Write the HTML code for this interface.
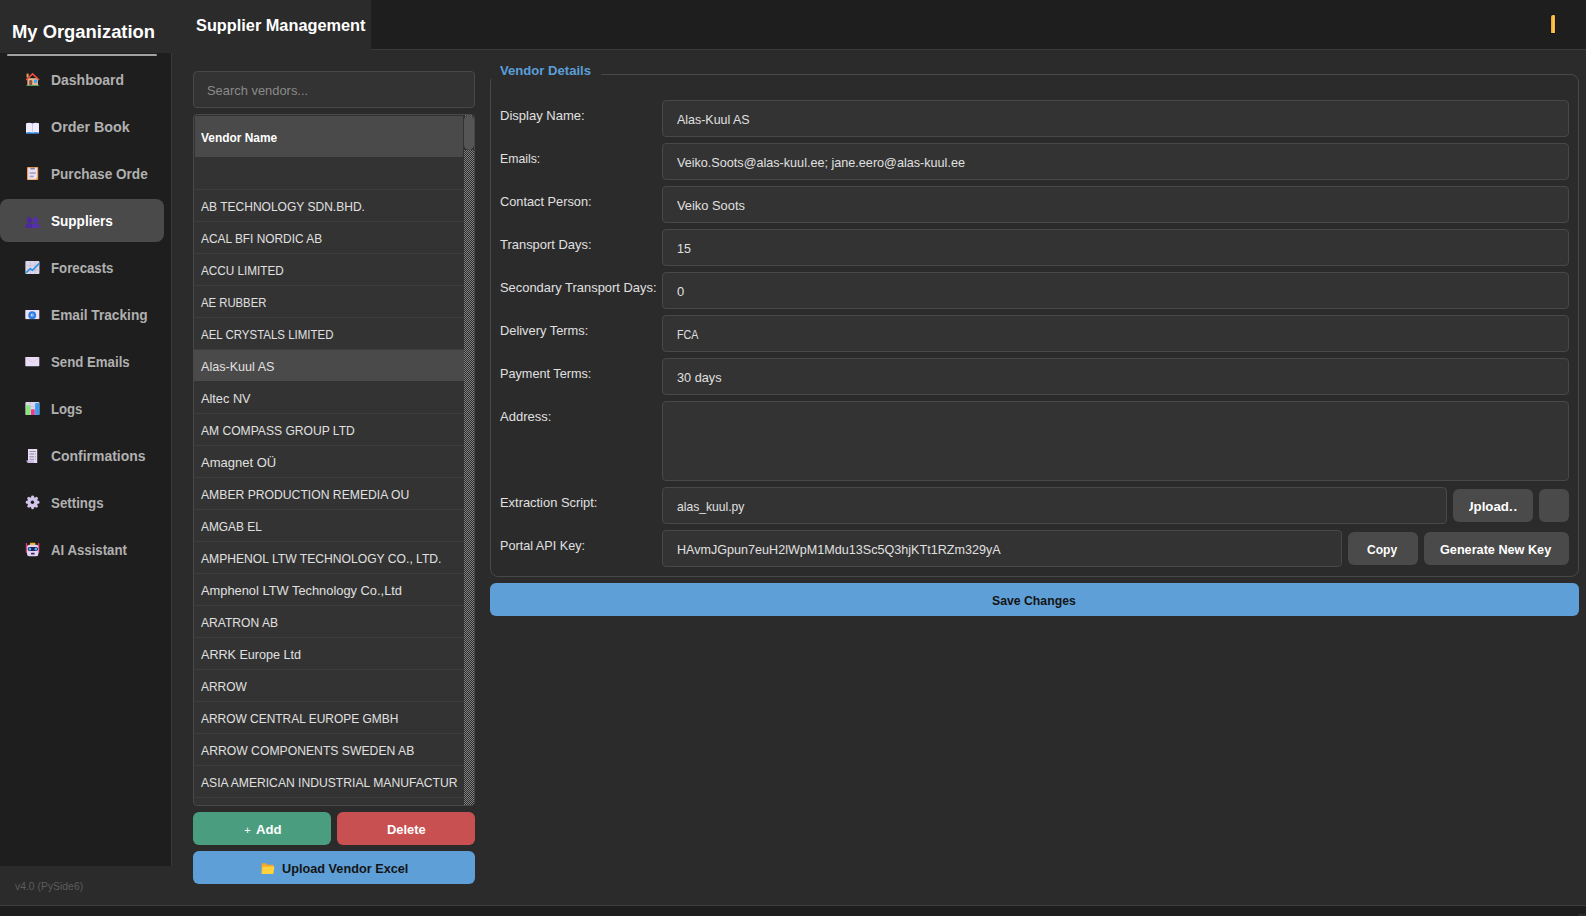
<!DOCTYPE html>
<html lang="en"><head><meta charset="utf-8"><title>Supplier Management</title>
<style>
*{box-sizing:border-box;margin:0;padding:0}
html,body{width:1586px;height:916px;overflow:hidden;background:#2b2b2b}
body{font-family:"Liberation Sans",sans-serif;font-size:13px;color:#e0e0e0}
#app{position:relative;width:1586px;height:916px;background:#2b2b2b;overflow:hidden}
#app>div,#app>nav,#app>header,#app>footer,#app>section,.ic{position:absolute}
.t{position:absolute;white-space:nowrap;transform-origin:0 0;display:block;font-size:13px;line-height:16px;color:#e0e0e0}
.b{font-weight:bold}
.n{font-size:14px;font-weight:bold;color:#b0b0b0}
.w{color:#fff}
.dk{color:#141414}
.sbbody{left:0;top:53px;width:172px;height:813px;background:#1e1e1e;border-right:1px solid #3a3a3a}
.navsel{left:0;top:199px;width:164px;height:43px;border-radius:8px;background:#4a4a4a}
.sbline{left:7px;top:54px;width:150px;height:2px;background:#a2a2a2;border-radius:1px}
.topdark{left:371px;top:0;width:1215px;height:50px;background:#1e1e1e;border-bottom:1px solid #3c3c3c}
.bell{left:1551px;top:15px;width:4px;height:18px;background:linear-gradient(90deg,#f0a030,#ffc84a 65%,#f2aa3c);border-radius:2px 1px 0 0;box-shadow:0 0 0 1px #14161c}
.status{left:0;top:905px;width:1586px;height:11px;background:#1e1e1e;border-top:1px solid #3c3c3c}
.inp{background:#333;border:1px solid #484848;border-radius:4px;height:37px}
.btn{height:33px;border-radius:6px;background:#4a4a4a}
.table{left:193px;top:114px;width:282px;height:692px;border:1px solid #484848;border-radius:4px;background:#333;overflow:hidden}
.th{position:absolute;left:1px;top:1px;width:268px;height:41px;background:#4a4a4a}
.row{position:absolute;left:0;width:270px;height:32px;border-bottom:1px solid #3d3d3d}
.row.sel{background:#4a4a4a;border-bottom-color:#333}
.scroll{position:absolute;left:270px;top:0;width:10px;height:690px;background-color:#333;background-image:conic-gradient(#808080 25%,#2c2c2c 0 50%,#808080 0 75%,#2c2c2c 0);background-size:2px 2px}
.hbg{position:absolute;left:270px;top:1px;width:10px;height:34px;background:#2e2e2e}
.handle{position:absolute;left:270px;top:0px;width:10px;height:35px;background:#555;border-radius:5px}
.group{left:490px;top:74px;width:1089px;height:503px;border:1px solid #484848;border-radius:8px}
.gtitle{left:490px;top:60px;width:111px;height:19px;background:#2b2b2b}
.clip{left:1468.8px;top:489px;width:48.1px;height:33px;overflow:hidden}
</style></head>
<body>
<div id="app">
<nav class="sbbody"></nav>
<div class="navsel"></div>
<div class="sbline"></div>
<span class="t b w" style="left:12px;top:21px;transform:scaleX(1.0218);font-size:18px;line-height:22px;">My Organization</span>
<svg class="ic" style="left:25px;top:72px" width="15" height="14" viewBox="0 0 15 14"><rect x="1.6" y="1.6" width="2" height="4" fill="#e8a060"/><rect x="2.4" y="6.2" width="10.6" height="7" fill="#e6b68c"/><path d="M0.6 7.6 L7.6 0.8 L14.6 7.6 L13.4 8.6 L7.6 3 L1.8 8.6 Z" fill="#f0503a"/><rect x="4.2" y="8" width="3" height="5.2" rx="1.2" fill="#8c5448"/><rect x="9" y="7.6" width="3.2" height="3.2" fill="#35a8f5"/><rect x="1.4" y="13" width="12.8" height="0.9" fill="#58a860"/></svg>
<span class="t n" style="left:51px;top:72px;transform:scaleX(0.9972);">Dashboard</span>
<svg class="ic" style="left:25px;top:122px" width="15" height="13" viewBox="0 0 15 13"><path d="M1 1.6 Q4.4 0.4 7.5 1.8 Q10.6 0.4 14 1.6 V11.8 H1 Z" fill="#3a8ff0"/><path d="M1 1.4 Q4.4 0.2 7.5 1.6 V10.6 Q4.4 9.6 1 10.4 Z" fill="#f3ecff"/><path d="M14 1.4 Q10.6 0.2 7.5 1.6 V10.6 Q10.6 9.6 14 10.4 Z" fill="#f3ecff"/><rect x="7.2" y="1.6" width="0.6" height="9" fill="#cfc4e4"/></svg>
<span class="t n" style="left:51px;top:119px;transform:scaleX(1.0220);">Order Book</span>
<svg class="ic" style="left:26px;top:166px" width="13" height="15" viewBox="0 0 13 15"><rect x="1" y="1" width="11.2" height="13" rx="0.8" fill="#f0a253"/><path d="M2.2 2 H11 V10.4 L9 13.2 H2.2 Z" fill="#e9e2f7"/><rect x="4.2" y="1.4" width="4.8" height="2.2" rx="1" fill="#8d849c"/><rect x="3.6" y="6.2" width="6.2" height="1.7" fill="#aaa2b8"/><rect x="3.6" y="9.6" width="4.2" height="1.7" fill="#aaa2b8"/><path d="M11 10.4 L9 13.2 L8.6 11 Z" fill="#f6f0ff"/></svg>
<span class="t n" style="left:51px;top:166px;transform:scaleX(0.9709);">Purchase Orde</span>
<svg class="ic" style="left:25px;top:216px" width="15" height="13" viewBox="0 0 15 13"><g fill="#4b2a9c"><ellipse cx="4.2" cy="4.2" rx="2.7" ry="3"/><path d="M0.4 12 V10 Q0.4 7.6 2.6 7.4 H5.8 Q8 7.6 8 10 V12 Z"/></g><g fill="#5530ae"><ellipse cx="10.6" cy="4.2" rx="2.7" ry="3"/><path d="M6.8 12 V10 Q6.8 7.6 9 7.4 H12.2 Q14.4 7.6 14.4 10 V12 Z"/></g></svg>
<span class="t n w" style="left:51px;top:213px;transform:scaleX(0.9688);">Suppliers</span>
<svg class="ic" style="left:25px;top:260px" width="15" height="15" viewBox="0 0 15 15"><rect x="0.4" y="1" width="14" height="13" rx="0.8" fill="#ded6ea"/><path d="M5.2 1 V14 M10 1 V14 M0.4 5.4 H14.4 M0.4 9.8 H14.4" stroke="#c4bad6" stroke-width="0.7" fill="none"/><path d="M0.9 12.8 L5.4 8.6 L7.4 10.3 L14.2 3.4" fill="none" stroke="#2f96e4" stroke-width="1.7" stroke-linejoin="round"/></svg>
<span class="t n" style="left:51px;top:260px;transform:scaleX(0.9444);">Forecasts</span>
<svg class="ic" style="left:25px;top:309px" width="15" height="11" viewBox="0 0 15 11"><rect x="0.3" y="0.9" width="14" height="9.3" rx="0.6" fill="#ebe2f6"/><circle cx="7.2" cy="6.2" r="3.9" fill="#2b7fe6"/><circle cx="7.2" cy="6" r="1.5" fill="#e6e0f6"/><circle cx="7.4" cy="5.9" r="0.7" fill="#2b7fe6"/><rect x="0.3" y="10.2" width="14" height="0.6" fill="#1e1e1e"/></svg>
<span class="t n" style="left:51px;top:307px;transform:scaleX(0.9776);">Email Tracking</span>
<svg class="ic" style="left:25px;top:356px" width="15" height="11" viewBox="0 0 15 11"><rect x="0.3" y="0.9" width="14" height="9.3" rx="0.6" fill="#e9def4"/><path d="M1 1.8 L7.4 6.6 L13.8 1.8" fill="none" stroke="#dbc6ee" stroke-width="0.9"/></svg>
<span class="t n" style="left:51px;top:354px;transform:scaleX(0.9449);">Send Emails</span>
<svg class="ic" style="left:25px;top:401px" width="15" height="15" viewBox="0 0 15 15"><rect x="0.4" y="1" width="14" height="13" rx="0.8" fill="#dcd4e8"/><path d="M5.4 1 V14 M0.4 5.6 H10" stroke="#c6bcd8" stroke-width="0.6"/><rect x="1.2" y="4.2" width="4.1" height="9.8" rx="0.8" fill="#7fe877"/><rect x="6" y="8.2" width="3.8" height="5.8" rx="0.6" fill="#f03a84"/><rect x="10.1" y="2" width="4.2" height="12" rx="0.8" fill="#389ff0"/></svg>
<span class="t n" style="left:51px;top:401px;transform:scaleX(0.9383);">Logs</span>
<svg class="ic" style="left:25px;top:448px" width="15" height="16" viewBox="0 0 15 16"><path d="M3 1 H12.2 V15 H3 Z" fill="#e6def4"/><path d="M1.4 12.6 Q1.4 15 3.4 15 H9 V12.6 Z" fill="#cdb8e6"/><g fill="#9a92ac"><rect x="4.4" y="3" width="6.4" height="1"/><rect x="4.4" y="5.4" width="4.6" height="1.2"/><rect x="4.4" y="8.2" width="4.6" height="1.2"/><rect x="4.4" y="10.8" width="4.6" height="1"/><rect x="9.8" y="5.4" width="1" height="1.2"/><rect x="9.8" y="8.2" width="1" height="1.2"/><rect x="9.8" y="10.8" width="1" height="1"/></g></svg>
<span class="t n" style="left:51px;top:448px;transform:scaleX(0.9959);">Confirmations</span>
<svg class="ic" style="left:25px;top:495px" width="15" height="15" viewBox="0 0 15 15"><g fill="#d2c4ea"><rect x="6.1" y="0.4" width="3" height="13.8" rx="1.4" transform="rotate(0 7.6 7.3)"/><rect x="6.1" y="0.4" width="3" height="13.8" rx="1.4" transform="rotate(45 7.6 7.3)"/><rect x="6.1" y="0.4" width="3" height="13.8" rx="1.4" transform="rotate(90 7.6 7.3)"/><rect x="6.1" y="0.4" width="3" height="13.8" rx="1.4" transform="rotate(135 7.6 7.3)"/><circle cx="7.6" cy="7.3" r="5.2"/></g><circle cx="7.4" cy="7.3" r="1.7" fill="#1a1a1a"/></svg>
<span class="t n" style="left:51px;top:495px;transform:scaleX(0.9513);">Settings</span>
<svg class="ic" style="left:25px;top:542px" width="15" height="15" viewBox="0 0 15 15"><rect x="5" y="0.8" width="5.4" height="2.4" rx="0.8" fill="#f0ae20"/><rect x="0.8" y="0.9" width="1.3" height="10" rx="0.6" fill="#ea3a72"/><rect x="13" y="0.9" width="1.3" height="10" rx="0.6" fill="#ea3a72"/><rect x="2" y="2.8" width="11.4" height="11.4" rx="2.2" fill="#e2d2f2"/><rect x="2.6" y="4.9" width="10.4" height="4" rx="2" fill="#2c1c54"/><ellipse cx="4.9" cy="6.9" rx="1.3" ry="1.5" fill="#30c4ff"/><ellipse cx="10.8" cy="6.9" rx="1.3" ry="1.5" fill="#30c4ff"/><rect x="6" y="10.8" width="3.6" height="1.7" rx="0.5" fill="#35285c"/></svg>
<span class="t n" style="left:51px;top:542px;transform:scaleX(0.9447);">AI Assistant</span>
<span class="t " style="left:15px;top:879px;transform:scaleX(0.9441);font-size:11px;line-height:14px;color:#5c5c5c;">v4.0 (PySide6)</span>
<header class="topdark"></header>
<span class="t b w" style="left:196px;top:16px;transform:scaleX(1.0192);font-size:16px;line-height:20px;">Supplier Management</span>
<div class="bell"></div>
<div class="inp" style="left:193px;top:71px;width:282px"></div>
<span class="t " style="left:207px;top:83px;transform:scaleX(0.9924);color:#8a8a8a;">Search vendors...</span>
<section class="table">
<div class="th"></div>
<div class="row" style="top:43px"></div>
<div class="row" style="top:75px"></div>
<div class="row" style="top:107px"></div>
<div class="row" style="top:139px"></div>
<div class="row" style="top:171px"></div>
<div class="row" style="top:203px"></div>
<div class="row sel" style="top:235px"></div>
<div class="row" style="top:267px"></div>
<div class="row" style="top:299px"></div>
<div class="row" style="top:331px"></div>
<div class="row" style="top:363px"></div>
<div class="row" style="top:395px"></div>
<div class="row" style="top:427px"></div>
<div class="row" style="top:459px"></div>
<div class="row" style="top:491px"></div>
<div class="row" style="top:523px"></div>
<div class="row" style="top:555px"></div>
<div class="row" style="top:587px"></div>
<div class="row" style="top:619px"></div>
<div class="row" style="top:651px"></div>
<div class="scroll"></div><div class="hbg"></div><div class="handle"></div>
</section>
<span class="t b w" style="left:201px;top:130px;transform:scaleX(0.9168);">Vendor Name</span>
<span class="t " style="left:201px;top:199px;transform:scaleX(0.9249);">AB TECHNOLOGY SDN.BHD.</span>
<span class="t " style="left:201px;top:231px;transform:scaleX(0.9143);">ACAL BFI NORDIC AB</span>
<span class="t " style="left:201px;top:263px;transform:scaleX(0.9026);">ACCU LIMITED</span>
<span class="t " style="left:201px;top:295px;transform:scaleX(0.8701);">AE RUBBER</span>
<span class="t " style="left:201px;top:327px;transform:scaleX(0.8827);">AEL CRYSTALS LIMITED</span>
<span class="t " style="left:201px;top:359px;transform:scaleX(0.9680);">Alas-Kuul AS</span>
<span class="t " style="left:201px;top:391px;transform:scaleX(0.9804);">Altec NV</span>
<span class="t " style="left:201px;top:423px;transform:scaleX(0.9298);">AM COMPASS GROUP LTD</span>
<span class="t " style="left:201px;top:455px;">Amagnet OÜ</span>
<span class="t " style="left:201px;top:487px;transform:scaleX(0.9363);">AMBER PRODUCTION REMEDIA OU</span>
<span class="t " style="left:201px;top:519px;transform:scaleX(0.9139);">AMGAB EL</span>
<span class="t " style="left:201px;top:551px;transform:scaleX(0.9326);">AMPHENOL LTW TECHNOLOGY CO., LTD.</span>
<span class="t " style="left:201px;top:583px;transform:scaleX(0.9887);">Amphenol LTW Technology Co.,Ltd</span>
<span class="t " style="left:201px;top:615px;transform:scaleX(0.9305);">ARATRON AB</span>
<span class="t " style="left:201px;top:647px;transform:scaleX(0.9680);">ARRK Europe Ltd</span>
<span class="t " style="left:201px;top:679px;transform:scaleX(0.9192);">ARROW</span>
<span class="t " style="left:201px;top:711px;transform:scaleX(0.9186);">ARROW CENTRAL EUROPE GMBH</span>
<span class="t " style="left:201px;top:743px;transform:scaleX(0.9376);">ARROW COMPONENTS SWEDEN AB</span>
<span class="t " style="left:201px;top:775px;transform:scaleX(0.9335);">ASIA AMERICAN INDUSTRIAL MANUFACTUR</span>
<div class="btn" style="left:193px;top:812px;width:138px;background:#4a9d7e"></div>
<span class="t w" style="left:244.2px;top:823px;font-size:11px;line-height:14px">+</span>
<span class="t b w" style="left:256px;top:822px;transform:scaleX(1.0087);">Add</span>
<div class="btn" style="left:337px;top:812px;width:138px;background:#c85050"></div>
<span class="t b w" style="left:387px;top:822px;transform:scaleX(0.9926);">Delete</span>
<div class="btn" style="left:193px;top:851px;width:282px;background:#5e9fd8"></div>
<svg class="ic" style="left:261px;top:862px" width="14" height="13" viewBox="0 0 14 13"><path d="M0.6 2.2 Q0.6 1.2 1.6 1.2 H4.8 L6.4 2.8 H11.6 Q12.6 2.8 12.6 3.8 V11 Q12.6 12 11.6 12 H1.6 Q0.6 12 0.6 11 Z" fill="#f7a828"/><path d="M2.6 4.4 H12.6 Q13.5 4.4 13.3 5.3 L12.3 11.2 Q12.1 12 11.3 12 H1.4 Q0.5 12 0.7 11.1 L1.6 5.2 Q1.8 4.4 2.6 4.4 Z" fill="#ffd23f"/></svg>
<span class="t b dk" style="left:282px;top:861px;transform:scaleX(0.9775);">Upload Vendor Excel</span>
<section class="group"></section>
<div class="gtitle"></div>
<span class="t b" style="left:500px;top:63px;transform:scaleX(1.0078);color:#5b9fd8;">Vendor Details</span>
<span class="t " style="left:500px;top:108px;transform:scaleX(1.0025);">Display Name:</span>
<div class="inp" style="left:662px;top:100px;width:907px"></div>
<span class="t " style="left:677px;top:112px;transform:scaleX(0.9572);">Alas-Kuul AS</span>
<span class="t " style="left:500px;top:151px;transform:scaleX(0.9447);">Emails:</span>
<div class="inp" style="left:662px;top:143px;width:907px"></div>
<span class="t " style="left:677px;top:155px;transform:scaleX(0.9706);">Veiko.Soots@alas-kuul.ee; jane.eero@alas-kuul.ee</span>
<span class="t " style="left:500px;top:194px;transform:scaleX(0.9827);">Contact Person:</span>
<div class="inp" style="left:662px;top:186px;width:907px"></div>
<span class="t " style="left:677px;top:198px;transform:scaleX(0.9891);">Veiko Soots</span>
<span class="t " style="left:500px;top:237px;transform:scaleX(0.9956);">Transport Days:</span>
<div class="inp" style="left:662px;top:229px;width:907px"></div>
<span class="t " style="left:677px;top:241px;transform:scaleX(0.9577);">15</span>
<span class="t " style="left:500px;top:280px;transform:scaleX(0.9936);">Secondary Transport Days:</span>
<div class="inp" style="left:662px;top:272px;width:907px"></div>
<span class="t " style="left:677px;top:284px;">0</span>
<span class="t " style="left:500px;top:323px;transform:scaleX(0.9876);">Delivery Terms:</span>
<div class="inp" style="left:662px;top:315px;width:907px"></div>
<span class="t " style="left:677px;top:327px;transform:scaleX(0.8242);">FCA</span>
<span class="t " style="left:500px;top:366px;transform:scaleX(0.9752);">Payment Terms:</span>
<div class="inp" style="left:662px;top:358px;width:907px"></div>
<span class="t " style="left:677px;top:370px;transform:scaleX(0.9771);">30 days</span>
<span class="t " style="left:500px;top:409px;">Address:</span>
<div class="inp" style="left:662px;top:401px;width:907px;height:80px"></div>
<span class="t " style="left:500px;top:495px;transform:scaleX(0.9918);">Extraction Script:</span>
<div class="inp" style="left:662px;top:487px;width:785px"></div>
<span class="t " style="left:677px;top:499px;transform:scaleX(0.9327);">alas_kuul.py</span>
<div class="btn" style="left:1453px;top:489px;width:80px"></div>
<div class="clip"><span class="t b w" style="left:-4.6px;top:10px;transform:scaleX(1.02)">Upload<span style="letter-spacing:0.8px">...</span></span></div>
<div class="btn" style="left:1539px;top:489px;width:30px"></div>
<span class="t " style="left:500px;top:538px;transform:scaleX(0.9723);">Portal API Key:</span>
<div class="inp" style="left:662px;top:530px;width:680px"></div>
<span class="t " style="left:677px;top:542px;transform:scaleX(0.9679);">HAvmJGpun7euH2lWpM1Mdu13Sc5Q3hjKTt1RZm329yA</span>
<div class="btn" style="left:1348px;top:532px;width:70px"></div>
<span class="t b w" style="left:1367px;top:542px;transform:scaleX(0.9279);">Copy</span>
<div class="btn" style="left:1424px;top:532px;width:145px"></div>
<span class="t b w" style="left:1440px;top:542px;transform:scaleX(0.9739);">Generate New Key</span>
<div class="btn" style="left:490px;top:583px;width:1089px;background:#5e9fd8"></div>
<span class="t b dk" style="left:992px;top:593px;transform:scaleX(0.9424);">Save Changes</span>
<footer class="status"></footer>
<div style="left:1578px;top:914px;width:8px;height:2px;background:#2b2b2b"></div>
</div>
</body></html>
